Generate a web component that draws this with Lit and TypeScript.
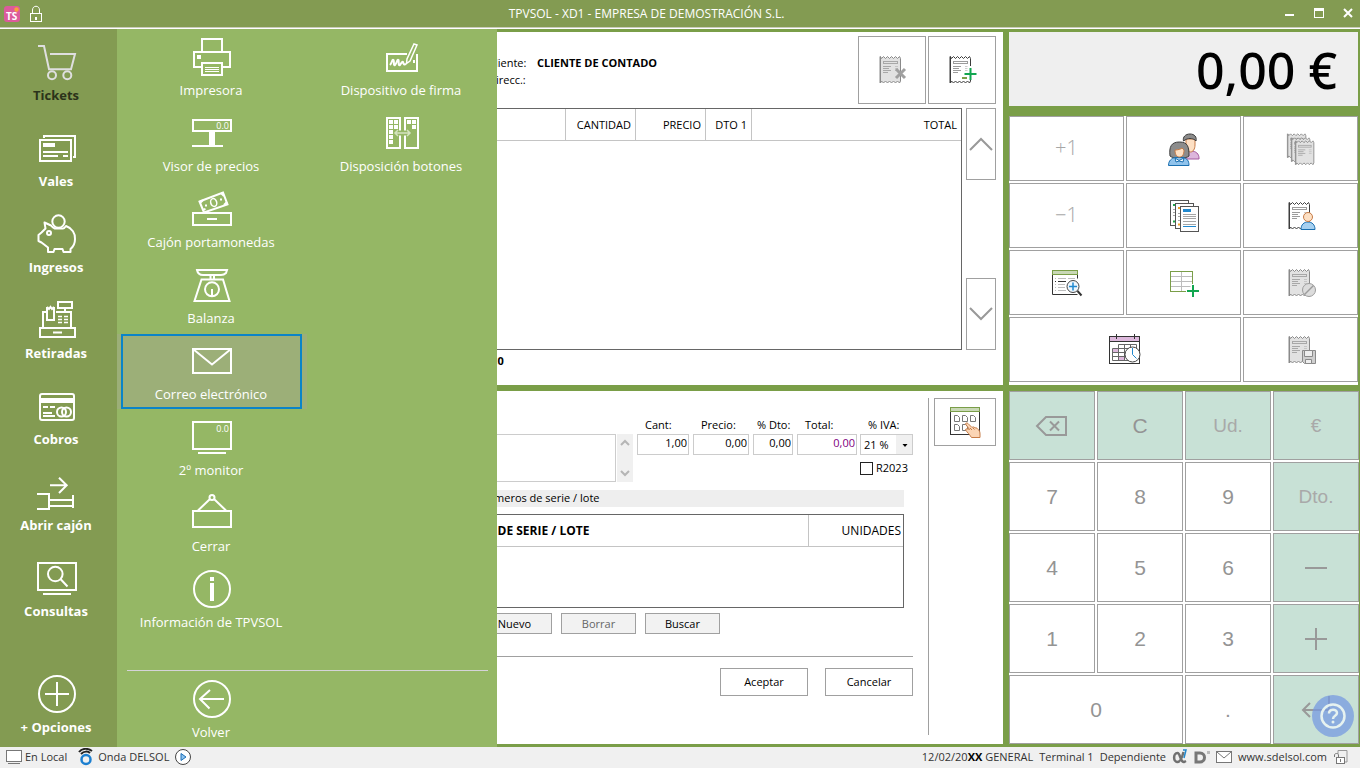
import { LitElement, html, svg, css } from "lit";
import { customElement, property, state } from "lit/decorators.js";
import { classMap } from "lit/directives/class-map.js";

/* Line icons of the two menus: all on a 48 x 48 grid. */
const menuIcons: Record<string, unknown> = {
  tickets: svg`<g stroke="#dfdfdf"><path d="M5 8H11L16 31.3H38L42 16H17"/><circle cx="19" cy="37.3" r="4"/><circle cx="34.3" cy="37.3" r="4"/></g>`,
  vales: svg`<rect x="7" y="16" width="31" height="21"/><path d="M11 14V12H42V33H40M10 28H35M10 32H25M30 32H35"/><rect x="10" y="19" width="12" height="4" fill="#fff" stroke="none"/>`,
  ingresos: svg`<circle cx="25.5" cy="11.5" r="6.2"/><circle cx="16" cy="23" r="2"/><path d="M11.5 12.5L18 15.500C20 18 21 18 22 18.500H30C31 18.500 32 17.500 33 16C39 18 42.500 23.500 42 29C42 34 40 37 37.500 39V42H30.500L29.500 39H21.500L20.500 42H15V37.500L8.500 32.500L5.500 31V25L8.500 22.500L12.500 18.500Z" stroke-linejoin="round"/>`,
  retiradas: svg`<rect x="7" y="32" width="35" height="9"/><path d="M20 36.500H29M13 16H10V32M23 16H38V32M14 11V24H21V11M14 11L16 13L17.500 11L19 13L21 11M32 12V16"/><rect x="25" y="6" width="14" height="6"/><path d="M25 20.500H29M31 20.500H35M25 23.500H29M31 23.500H35M25 26.500H29M31 26.500H35" stroke-width="1.500"/>`,
  cobros: svg`<rect x="7" y="12" width="34" height="26" rx="2"/><path d="M7 18.500H41" stroke-width="5"/><path d="M10 25H15M17 25H22M10 31H19M10 34H22"/><circle cx="28.500" cy="30" r="4.500"/><circle cx="33.500" cy="30" r="4.500"/>`,
  abrir: svg`<path d="M17 17.300H33M26 9.700L33.700 17.300L26 25M4 26H16V41H4M16 32H40M16 38H40M40 27V40"/>`,
  consultas: svg`<rect x="5" y="9" width="38" height="27"/><path d="M10 40H38M27.500 25L34.500 32.500"/><circle cx="22.300" cy="20" r="7.300"/>`,
  opciones: svg`<circle cx="24" cy="24" r="18"/><path d="M12 24H36M24 12V36"/>`,
  impresora: svg`<path d="M14 19V6H34V19M14 34H6V19H42V34H34"/><rect x="14" y="30" width="20" height="12"/><rect x="9" y="22" width="4" height="4" fill="#fff" stroke="none"/><path d="M17 34.500H31M17 36.500H31M17 38.500H31" stroke-width="1"/>`,
  visor: svg`<rect x="5" y="11" width="38" height="11"/><path d="M24 22V37" stroke-width="6"/><path d="M4 37H35"/><text x="41" y="20" text-anchor="end">0.0</text>`,
  cajon: svg`<rect x="5" y="28" width="38" height="12"/><path d="M19 34H29"/><path d="M11.500 16.500L35 7.500L39.500 19.500L16 27.500Z"/><ellipse cx="25.700" cy="17.500" rx="3" ry="4" stroke-width="1.500" transform="rotate(-15 25.700 17.500)"/><path d="M17 20.500h2M32 14.500h2M12 18l3-3M14.500 25l3-1M33 8l3 3M36 20l3-3"/>`,
  balanza: svg`<path d="M9 9H39L38 12Q36 14 33 14H15Q10 14 9 9ZM22.500 14V18M26 14V18M13.500 18.500H35L41.500 40H6.500Z"/><circle cx="24" cy="28.300" r="7"/><path d="M24 28V35"/>`,
  correo: svg`<rect x="5" y="12" width="38" height="24"/><path d="M5 12L24 27.500L43 12"/>`,
  monitor: svg`<rect x="5" y="9" width="38" height="27"/><path d="M10 40H38"/><text x="41" y="19" text-anchor="end">0.0</text>`,
  cerrar: svg`<circle cx="24" cy="8.500" r="2.500"/><path d="M22 10L10 21.500M26 10L38 21.500"/><rect x="5" y="22" width="38" height="16"/>`,
  info: svg`<circle cx="24" cy="24" r="18"/><path d="M22 14H26" stroke-width="4"/><path d="M24 18V36" stroke-width="4"/>`,
  volver: svg`<circle cx="24" cy="24" r="18"/><path d="M36 24H12M22 15L12 24L21.500 33.500"/>`,
  firma: svg`<path d="M29 21H9V38H39V21"/><path d="M12 32C14 30 14 26 15.500 27C16.500 28 15 33 17 32C19 30 19 26 20.500 27C21 29 20 33 22 32C23 31 24 28 25 29C25.500 31 26 32 28 31"/><path d="M36 11L39 12L32 28L28.500 30.500L29 26Z" stroke-width="1.500"/><path d="M36 27V30" />`,
  disposicion: svg`<rect x="9" y="9" width="13" height="30"/><rect x="27" y="9" width="13" height="30"/><g fill="#fff" stroke="none"><path d="M11 11h4v4h-4zM16 11h4v4h-4zM11 16h4v4h-4zM16 16h4v4h-4zM11 21h4v4h-4zM11 26h4v4h-4zM11 31h4v4h-4zM29 11h4v4h-4zM34 11h4v4h-4zM34 16h4v4h-4z"/></g><path d="M17 24H32" stroke="#95b765" stroke-width="5"/><path d="M17 24H32M20 21L17 24L20 27M29 21L32 24L29 27" stroke="#d5e4c0" stroke-width="1.500"/>`,
};

/* Receipt with torn top and bottom edges, shared by several buttons. */
const receipt = (ink: string, paper: string, line: string) => svg`
  <path d="M6 6.500V33" stroke="${ink}"/>
  <path d="M6.500 6.500l1 2 2-2 2 2 2-2 2 2 2-2 2 2 2-2 2 2 2-2 1 2V31l-1 2-2-2-2 2-2-2-2 2-2-2-2 2-2-2-2 2-2-2-1 2z" fill="${paper}" stroke="${ink}"/>
  <rect x="9.500" y="11.500" width="14" height="2" fill="none" stroke="${line}"/>
  <path d="M9 16.500h8M9 18.500h6M9 20.500h8M9 22.500h5" stroke="${line}"/><path d="M21 16.500h3M21 18.500h3M21 20.500h3" stroke="${line}" stroke-opacity=".5"/>`;
const greyReceipt = receipt("#8a8a8a", "#e2e2e2", "#a8a8a8");
const darkReceipt = receipt("#3c3c3c", "#fff", "#9c9c9c");

/* Coloured action icons on a 40 x 40 grid. */
const actionIcons: Record<string, unknown> = {
  remove: svg`<g transform="translate(2 0)">${greyReceipt}<path d="M22 19L31 28M31 19L22 28" stroke="#a0a0a0" stroke-width="3"/></g>`,
  add: svg`<g transform="translate(2 0)">${darkReceipt}<path d="M26 16V30M19 23.500H33" stroke="#fff" stroke-width="5"/><path d="M26.500 18V30M20.500 24H32.500" stroke="#12a650" stroke-width="2"/><path d="M18 28h5" stroke="#7a9e48" stroke-width="2"/></g>`,
  people: svg`<path d="M19 30c0-6 3-8 8-8 5 0 8 3 8 7v1z" fill="#dcb6dc" stroke="#a4589f"/><path d="M22 10v6c0 4 2 7 4.500 7s4.500-3 4.500-7v-6z" fill="#fde0c4" stroke="#c67b46"/><path d="M19.500 12c-1-4 2-7 6.500-7s7 3 6 7l-1-1c-3-2-7-2-10 0z" fill="#8c8c8c" stroke="#3c3c3c"/><path d="M6 27c-1-9 1-14 9.500-14S25 18 25 27c-3 3-16 3-19 0z" fill="#8c8c8c" stroke="#3c3c3c"/><path d="M4.500 36.500c0-5 3-7 6.500-8h8c4 1 6 3 6 8z" fill="#90c3ec" stroke="#1a6fb0"/><path d="M11 21c3 0 6-1 7-2l2 2c0 5-2 7-4.500 7S11 26 11 21z" fill="#fde0c4" stroke="#c67b46"/><path d="M11 29l4 2.500 5-2.500-1 4-4-1-3 1z" fill="#fff" stroke="#1a6fb0"/>`,
  stack: svg`<g transform="translate(1 -1) scale(.9)">${greyReceipt}</g><g transform="translate(5 3) scale(.9)">${greyReceipt}</g><g transform="translate(9 6) scale(.9)">${greyReceipt}</g>`,
  documents: svg`<g fill="#fff" stroke="#555"><rect x="6.500" y="4.500" width="18" height="25"/><rect x="11.500" y="7.500" width="18" height="25"/><rect x="16.500" y="10.500" width="18" height="25"/></g><path d="M9 9h2M9 25.500h2" stroke="#1ea64b" stroke-width="2"/><path d="M14 12h2M14 28.500h2" stroke="#f2a32c" stroke-width="2"/><path d="M9 13.500h2M9 16.500h2M9 19.500h2M14 17.500h2M14 20.500h2M14 24.500h2M19 18.500h13M19 20.500h13M19 22.500h13M19 25.500h13M19 28.500h13" stroke="#a6a6a6"/><path d="M19 14.500h8" stroke="#2189cf" stroke-width="3"/><path d="M19 30.500h13" stroke="#2189cf"/>`,
  client: svg`<g transform="translate(2 0)">${darkReceipt}<path d="M18 33.500c0-5 3-7.500 7-7.500s7 2.500 7 7.500z" fill="#a6d0f0" stroke="#1a6fb0"/><circle cx="25" cy="21" r="4.500" fill="#fde0c4" stroke="#c67b46"/></g>`,
  search: svg`<path d="M5.500 7.500v24h25M30.500 7.500v8" fill="none" stroke="#333"/><rect x="5.500" y="7.500" width="25" height="4" fill="#c9d8b6" stroke="#7a9e48"/><path d="M11 15.500h8M21 15.500h7M11 21.500h7M11 24.500h7M11 27.500h8M8 15.500h1M8 21.500h1M8 24.500h1M8 27.500h1" stroke="#bdbdbd"/><path d="M8 18.500h1M11 18.500h8" stroke="#333"/><circle cx="26" cy="23.500" r="6" fill="#eef6fc" stroke="#444"/><path d="M30.500 28l4 4.500" stroke="#333" stroke-width="2"/><path d="M26 19.500v8M22 23.500h8" stroke="#2189cf" stroke-width="1.500"/>`,
  table: svg`<rect x="6.500" y="8.500" width="22" height="20" fill="#fff" stroke="#7a9e48"/><path d="M17.500 9v19M7 13.500h21M7 18.500h21M7 23.500h21" stroke="#bdbdbd"/><path d="M29 21v14M22 28h14" stroke="#fff" stroke-width="5"/><path d="M29 22v12M23 28h12" stroke="#12a650" stroke-width="2"/>`,
  blocked: svg`<g transform="translate(2 0)">${greyReceipt}<circle cx="26" cy="27" r="6.500" fill="#dcdcdc" stroke="#9c9c9c"/><path d="M21.500 31.500l9-9" stroke="#9c9c9c" stroke-width="1.500"/></g>`,
  calendar: svg`<rect x="4.500" y="6.500" width="30" height="27" fill="#fff" stroke="#333"/><rect x="4.500" y="6.500" width="30" height="5" fill="#ddb8dc" stroke="#333"/><path d="M11.500 4v5M29.500 4v5" stroke="#333"/><path d="M8 19h5v3H8zM14 27h5v4h-5z" fill="#ddb8dc"/><path d="M13.500 14.500h18v16h-24v-12h24M7.500 22.500h24M7.500 26.500h24M13.500 14.500v16M19.500 14.500v16M25.500 14.500v16" fill="none" stroke="#666"/><circle cx="27.500" cy="24.500" r="7.500" fill="#fff" stroke="#444"/><path d="M27.500 18v6.500l4 4" fill="none" stroke="#2189cf"/>`,
  save: svg`<g transform="translate(2 0)">${greyReceipt}<path d="M19.500 20.500h13v13h-11l-2-2z" fill="#cfcfcf" stroke="#8a8a8a"/><path d="M21.500 20.500h8v6h-8zM22.500 29.500h6v4h-6z" fill="#eee" stroke="#8a8a8a"/></g>`,
  touch: svg`<rect x="5.500" y="5.500" width="29" height="27" fill="#fff" stroke="#333"/><rect x="5.500" y="5.500" width="29" height="4" fill="#c9d8b6" stroke="#7a9e48"/><path d="M9.500 13.500h3l2 2v4h-5zM17.500 13.500h3l2 2v4h-5zM25.500 13.500h3l2 2v4h-5zM9.500 22.500h3l2 2v4h-5zM17.500 22.500h3l2 2v4h-5z" fill="none" stroke="#777"/><path d="M20.500 22c0-1 1.500-1.500 2.500-.500l4 4c1-1 2.500-.500 3 .500 1-.500 2 0 2.500 1 2 1 2.500 3 2.500 5v3.500h-8.500c-2-3-4-5-6-7.500 0-1.500 2-1.500 4-.500z" fill="#fbd5b5" stroke="#c67b46"/><path d="M25 26l2 2M28 26l1.500 1.500" stroke="#c67b46"/>`,
};

/* Monochrome symbols drawn on pad keys and scroll buttons, 40 x 40. */
const keyIcons: Record<string, unknown> = {
  backspace: svg`<path d="M5 20L14 11H34V29H14ZM18 15.500L27 24.500M27 15.500L18 24.500"/>`,
  minus: svg`<path d="M9 20H31"/>`,
  plus: svg`<path d="M9 20H31M20 9V31"/>`,
  enter: svg`<path d="M33 6V20H7M14 13L7 20L14 27"/>`,
  up: svg`<path d="M9 26L20 15L31 26"/>`,
  down: svg`<path d="M9 14L20 25L31 14"/>`,
};

interface MenuEntry { icon: string; label: string; }

const mainMenu: MenuEntry[] = [
  { icon: "tickets", label: "Tickets" },
  { icon: "vales", label: "Vales" },
  { icon: "ingresos", label: "Ingresos" },
  { icon: "retiradas", label: "Retiradas" },
  { icon: "cobros", label: "Cobros" },
  { icon: "abrir", label: "Abrir cajón" },
  { icon: "consultas", label: "Consultas" },
];

const optionsMenu: MenuEntry[] = [
  { icon: "impresora", label: "Impresora" },
  { icon: "visor", label: "Visor de precios" },
  { icon: "cajon", label: "Cajón portamonedas" },
  { icon: "balanza", label: "Balanza" },
  { icon: "correo", label: "Correo electrónico" },
  { icon: "monitor", label: "2º monitor" },
  { icon: "cerrar", label: "Cerrar" },
  { icon: "info", label: "Información de TPVSOL" },
  { icon: "firma", label: "Dispositivo de firma" },
  { icon: "disposicion", label: "Disposición botones" },
];

const reset = css`
  * { box-sizing: border-box; }
  button { font: inherit; color: inherit; margin: 0; padding: 0; border: 0; background: none; cursor: pointer; border-radius: 0; }
  svg { display: block; flex: none; }
`;

@customElement("menu-item")
class MenuItem extends LitElement {
  @property() icon = "";
  @property() label = "";
  @property({ type: Boolean }) strong = false;
  @property({ type: Boolean }) current = false;
  @property({ type: Boolean }) selected = false;

  static styles = [reset, css`
    :host { display: block; }
    .item { width: 100%; display: flex; flex-direction: column; align-items: center; color: #fff; font-size: 13px; line-height: 18px; }
    .small { padding: 3px 0 6px 1px; height: 75px; font-weight: 500; }
    .strong { font-weight: 700; }
    .current { color: #2b331a; }
    .selected { box-shadow: inset 0 0 0 2px #0a84c8; }
    .label { padding-right: 2px; }
    .icon { fill: none; stroke: #fff; stroke-width: 2; }
    .icon text { fill: #fff; stroke: none; font-size: 9px; }
  `];

  render() {
    const classes = { item: true, small: !this.strong, strong: this.strong, current: this.current, selected: this.selected };
    return html`<button class=${classMap(classes)}>
      <svg class="icon" width="48" height="48" viewBox="0 0 48 48" aria-hidden="true">${menuIcons[this.icon]}</svg>
      <span class="label">${this.label}</span>
    </button>`;
  }
}

@customElement("app-root")
class AppRoot extends LitElement {
  @state() private selected = "correo";

  static styles = [reset, css`
    :host { display: flex; flex-direction: column; height: 100vh; font-family: "Open Sans", "Noto Sans", sans-serif; font-size: 11px; line-height: 16px; color: #000; background: #7a9e48; }

    .titlebar { display: flex; align-items: center; height: 29px; flex: none; background: #839b52; color: #fff; border-bottom: 1px solid #fff; box-shadow: inset 0 -1px #c9cbb8; font-size: 12px; }
    .title { flex: 1; text-align: center; }
    .tools { display: flex; gap: 6px; padding-left: 4px; }
    .win { display: flex; gap: 6px; padding-left: 32px; }
    .win svg { fill: none; stroke: #fff; stroke-width: 2; }
    .logo text { fill: #fff; font-size: 10px; font-weight: 700; }

    .body { flex: 1; min-height: 0; display: grid; grid-template-columns: 117px minmax(0, 1fr) 356px; position: relative; padding-right: 1px; }
    .sidebar { background: #839b52; padding: 9px 5px 11px 2px; display: flex; flex-direction: column; gap: 20px; }
    .bottom { margin-top: auto; }
    .flyout { position: absolute; z-index: 1; left: 117px; top: 0; bottom: 0; width: 380px; background: #95b765; display: flex; flex-direction: column; padding-top: 1px; }
    .options { display: grid; grid-template-rows: repeat(8, 76px); grid-auto-flow: column; grid-auto-columns: 190px; align-items: start; }
    .options menu-item { padding: 0 5px 0 4px; }
    .options .active { background: #9caf78; }
    .back { margin: auto 9px 0 10px; border-top: 1px solid #d5d3d8; padding-top: 1px; }
    .back menu-item { width: 169px; }

    .work { display: grid; grid-template-rows: 1fr 1fr; gap: 6px; padding: 3px 0; min-width: 0; }
    .panel { background: #fff; min-width: 0; min-height: 0; }
    .right { display: grid; grid-template-rows: 1fr 1fr; gap: 6px; padding: 3px 0; margin-left: 6px; }

    .outlined { background: #fff; border: 1px solid #a0a0a0; display: grid; place-items: center; }

    .ticket { padding: 4px 7px 0 10px; display: flex; flex-direction: column; gap: 4px; }
    .head { display: flex; gap: 2px; height: 68px; }
    .customer { margin: 19px auto 0 361px; display: grid; grid-template-columns: 49px 1fr; grid-auto-rows: 17px; white-space: nowrap; align-content: start; }
    .head .outlined { width: 68px; }
    .lines { display: flex; gap: 4px; height: 242px; }
    .grid { flex: 1; border: 1px solid #666; min-width: 0; }
    .grid table { width: 100%; border-collapse: separate; border-spacing: 0; table-layout: fixed; }
    .qty { width: 70px; }
    .disc { width: 46px; }
    .sum { width: 209px; }
    .units { width: 94px; }
    th { font-weight: 400; text-align: right; height: 32px; padding: 0 4px; border-right: 1px solid #c4c4c4; border-bottom: 1px solid #c4c4c4; white-space: nowrap; }
    th:last-child { border-right: 0; }
    .scroll { display: flex; flex-direction: column; justify-content: space-between; width: 30px; }
    .scroll .outlined { height: 72px; }
    .scroll .outlined svg { margin: 0 -6px; }
    .stroke { fill: none; stroke: #999; stroke-width: 2; }
    .count { font-weight: 700; margin-left: 361px; line-height: 14px; }

    .entry { display: flex; padding: 7px 7px 9px 10px; }
    .form { flex: 1; min-width: 0; border-right: 1px solid #a0a0a0; padding-right: 15px; display: flex; flex-direction: column; }
    .fields { display: flex; align-items: flex-start; gap: 4px; padding-top: 19px; height: 92px; }
    .note { flex: 1; min-width: 0; display: flex; gap: 1px; margin-top: 17px; }
    .note textarea { flex: 1; min-width: 0; height: 48px; resize: none; border: 1px solid #ccc; padding: 2px; font: inherit; overflow: hidden; }
    .track { width: 16px; height: 48px; background: #f0f0f0; display: flex; flex-direction: column; justify-content: space-between; padding: 4px 0; }
    .track svg { fill: none; }
    .field { display: flex; flex-direction: column; gap: 1px; }
    .field label { padding-left: 8px; white-space: nowrap; }
    .field.tight label { padding-left: 4px; }
    .field input { width: 100%; height: 21px; border: 1px solid #ccc; text-align: right; padding: 0 1px 5px; font: inherit; color: #000; background: #fff; border-radius: 0; }
    .field input.total { color: #800080; }
    .w52 { width: 52px; } .w56 { width: 56px; } .w40 { width: 40px; } .w60 { width: 60px; }
    .tax { width: 53px; margin-left: -1px; }
    .select { display: grid; }
    .select select { grid-area: 1 / 1; appearance: none; height: 21px; border: 1px solid #ccc; border-radius: 0; padding: 0 3px; font: inherit; color: #000; background: linear-gradient(#f0f0f0, #f0f0f0) right / 16px 100% no-repeat #fff; }
    .select svg { grid-area: 1 / 1; justify-self: end; align-self: center; pointer-events: none; margin-right: 4px; }
    .check { display: flex; align-items: center; gap: 3px; margin-top: 4px; }
    .check input { appearance: none; margin: 0; padding: 0; width: 13px; height: 13px; border: 1px solid #222; background: #fff; flex: none; }
    .field .check label { padding: 0; }
    .caption { background: #eee; height: 17px; margin-right: 9px; padding-left: 352px; }
    .serial { flex: none; height: 94px; margin: 7px 9px 5px 0; }
    .serial th.name { text-align: left; padding-left: 352px; font-weight: 700; font-size: 12px; }
    .serial th { font-size: 12px; }
    .serial th:last-child { padding-right: 2px; }
    .row { display: flex; gap: 9px; padding-left: 350px; padding-bottom: 22px; }
    .row button { width: 75px; height: 21px; border: 1px solid #a0a0a0; background: #f2f2f2; }
    .row button:disabled { color: #666; }
    .confirm { border-top: 1px solid #a0a0a0; padding-top: 11px; display: flex; gap: 17px; justify-content: flex-end; }
    .confirm .outlined { width: 88px; height: 28px; }
    .side { margin-left: 5px; }
    .side .outlined { width: 62px; height: 48px; }

    .top-right { display: flex; flex-direction: column; gap: 10px; padding-right: 1px; min-height: 0; }
    .display { height: 74px; background: #efefef; font-size: 50px; line-height: 76px; text-align: right; padding-right: 21px; font-weight: 500; font-family: "Noto Sans", "Open Sans", sans-serif; }
    .actions { flex: 1; background: #fff; display: grid; grid-template-columns: repeat(3, 1fr); grid-auto-rows: 1fr; gap: 2px; padding-bottom: 3px; }
    .wide { grid-column: span 2; }
    .step { color: #a6a6a6; font-weight: 300; font-size: 20px; padding-bottom: 2px; }
    .pad { background: #fff; display: grid; grid-template-columns: repeat(4, 1fr); grid-auto-rows: 1fr; gap: 2px; font-family: "Liberation Sans", Arial, sans-serif; font-size: 21px; color: #949494; }
    .pad .accent { background: #c8e1d6; }
    .pad .dim { color: #a9a9a9; font-size: 19px; }
    .help { position: absolute; z-index: 2; right: 6px; bottom: 10px; width: 42px; height: 42px; }

    .status { flex: none; height: 21px; background: #f0f0f0; color: #333; display: flex; align-items: center; gap: 6px; padding: 0 11px 2px 6px; white-space: nowrap; }
    .status a { color: inherit; text-decoration: none; }
    .cluster { display: flex; align-items: center; gap: 4px; margin-right: 5px; }
    .first { gap: 3px; }
    .push { margin-left: auto; }
    .status b { color: #000; }
  `];

  private action(icon: string, label: string, extra = "") {
    return html`<button class="outlined ${extra}" aria-label=${label}>
      <svg width="40" height="40" viewBox="0 0 40 40" fill="none">${actionIcons[icon]}</svg></button>`;
  }

  private symbol(icon: string, label: string, extra = "") {
    return html`<button class="outlined ${extra}" aria-label=${label}>
      <svg class="stroke" width="40" height="40" viewBox="0 0 40 40">${keyIcons[icon]}</svg></button>`;
  }

  private key(text: string, extra = "") {
    return html`<button class="outlined ${extra}">${text}</button>`;
  }

  private field(id: string, label: string, value: string, width: string, extra = "") {
    return html`<div class="field ${width}"><label for=${id}>${label}</label><input id=${id} class=${extra} .value=${value}></div>`;
  }

  render() {
    return html`
      <header class="titlebar">
        <div class="tools">
          <svg class="logo" width="18" height="18" viewBox="0 0 18 18" role="img" aria-label="TS"><rect x="0" y="1" width="16" height="16" rx="3" fill="#dc5b9b"/><circle cx="12.500" cy="4.500" r="2.200" fill="#f9a13a"/><text x="2" y="15">TS</text></svg>
          <svg width="18" height="18" viewBox="0 0 18 18" fill="none" stroke="#fff"><rect x="2.500" y="8.500" width="11" height="8"/><path d="M4.500 8V5C4.500 0 11.500 0 11.500 5V8"/><path d="M8 12v3" stroke-width="2"/></svg>
        </div>
        <span class="title">TPVSOL - XD1 - EMPRESA DE DEMOSTRACIÓN S.L.</span>
        <div class="win">
          <button aria-label="Minimizar"><svg width="23" height="23" viewBox="0 0 23 23"><path d="M6 12H15"/></svg></button>
          <button aria-label="Maximizar"><svg width="23" height="23" viewBox="0 0 23 23"><rect x="6.500" y="5.500" width="9" height="9" stroke-width="1"/><path d="M6 6.500H16" stroke-width="3"/></svg></button>
          <button aria-label="Cerrar"><svg width="23" height="23" viewBox="0 0 23 23"><path d="M7 6L15 14M15 6L7 14"/></svg></button>
        </div>
      </header>

      <div class="body">
        <nav class="sidebar">
          ${mainMenu.map((m, i) => html`<menu-item strong ?current=${i === 0} icon=${m.icon} label=${m.label}></menu-item>`)}
          <menu-item class="bottom" strong icon="opciones" label="+ Opciones"></menu-item>
        </nav>

        <nav class="flyout">
          <div class="options">
            ${optionsMenu.map((m) => html`<menu-item class=${classMap({ active: m.icon === this.selected })} icon=${m.icon} label=${m.label}
              ?selected=${m.icon === this.selected} @click=${() => (this.selected = m.icon)}></menu-item>`)}
          </div>
          <div class="back"><menu-item icon="volver" label="Volver"></menu-item></div>
        </nav>

        <main class="work">
          <section class="panel ticket">
            <div class="head">
              <div class="customer"><span>Cliente:</span><b>CLIENTE DE CONTADO</b><span>Direcc.:</span></div>
              ${this.action("remove", "Anular ticket")}
              ${this.action("add", "Nuevo ticket")}
            </div>
            <div class="lines">
              <div class="grid">
                <table>
                  <colgroup><col><col class="qty"><col class="qty"><col class="disc"><col class="sum"></colgroup>
                  <thead><tr><th></th><th>CANTIDAD</th><th>PRECIO</th><th>DTO 1</th><th>TOTAL</th></tr></thead>
                </table>
              </div>
              <div class="scroll">${this.symbol("up", "Subir")}${this.symbol("down", "Bajar")}</div>
            </div>
            <div class="count">0,0</div>
          </section>

          <section class="panel entry">
            <div class="form">
              <div class="fields">
                <div class="note">
                  <textarea aria-label="Descripción"></textarea>
                  <div class="track">
                    <svg width="16" height="10" viewBox="0 0 16 10" stroke="#b5b5b5" stroke-width="2"><path d="M4 7L8 3L12 7"/></svg>
                    <svg width="16" height="10" viewBox="0 0 16 10" stroke="#b5b5b5" stroke-width="2"><path d="M4 3L8 7L12 3"/></svg>
                  </div>
                </div>
                ${this.field("cant", "Cant:", "1,00", "w52")}
                ${this.field("precio", "Precio:", "0,00", "w56")}
                ${this.field("dto", "% Dto:", "0,00", "w40 tight")}
                ${this.field("total", "Total:", "0,00", "w60", "total")}
                <div class="field tax">
                  <label for="iva">% IVA:</label>
                  <div class="select">
                    <select id="iva"><option>21 %</option></select>
                    <svg width="8" height="8" viewBox="0 0 8 8"><path d="M1.500 3h5L4 6z" fill="#000"/></svg>
                  </div>
                  <div class="check"><input id="r2023" type="checkbox"><label for="r2023">R2023</label></div>
                </div>
              </div>
              <div class="caption">Números de serie / lote</div>
              <div class="grid serial">
                <table>
                  <colgroup><col><col class="units"></colgroup>
                  <thead><tr><th class="name">Nº DE SERIE / LOTE</th><th>UNIDADES</th></tr></thead>
                </table>
              </div>
              <div class="row"><button>Nuevo</button><button disabled>Borrar</button><button>Buscar</button></div>
              <div class="confirm"><button class="outlined">Aceptar</button><button class="outlined">Cancelar</button></div>
            </div>
            <div class="side">${this.action("touch", "Teclado de artículos")}</div>
          </section>
        </main>

        <aside class="right">
          <div class="top-right">
            <div class="display">0,00 €</div>
            <div class="actions">
              ${this.key("+1", "step")}${this.action("people", "Clientes")}${this.action("stack", "Tickets")}
              ${this.key("−1", "step")}${this.action("documents", "Documentos")}${this.action("client", "Ticket de cliente")}
              ${this.action("search", "Buscar artículo")}${this.action("table", "Nueva línea")}${this.action("blocked", "Anular")}
              ${this.action("calendar", "Agenda", "wide")}${this.action("save", "Guardar ticket")}
            </div>
          </div>
          <div class="pad">
            ${this.symbol("backspace", "Retroceso", "accent")}${this.key("C", "accent")}${this.key("Ud.", "accent dim")}${this.key("€", "accent dim")}
            ${this.key("7")}${this.key("8")}${this.key("9")}${this.key("Dto.", "accent dim")}
            ${this.key("4")}${this.key("5")}${this.key("6")}${this.symbol("minus", "Menos", "accent")}
            ${this.key("1")}${this.key("2")}${this.key("3")}${this.symbol("plus", "Más", "accent")}
            ${this.key("0", "wide")}${this.key(".")}${this.symbol("enter", "Intro", "accent")}
          </div>
        </aside>
        <button class="help" aria-label="Ayuda"><svg width="42" height="42" viewBox="0 0 42 42" fill="none"><circle cx="21" cy="21" r="21" fill="#7799e0" fill-opacity=".75"/><circle cx="21" cy="21" r="11.500" stroke="#e6f2f0" stroke-width="2.500"/><path d="M17 18.500C17 13.500 25 13.500 25 18C25 21 21 20.500 21 24" stroke="#e6f2f0" stroke-width="2.500"/><circle cx="21" cy="27" r="1.500" fill="#e6f2f0"/></svg></button>
      </div>

      <footer class="status">
        <span class="cluster first">
          <svg width="16" height="16" viewBox="0 0 16 16" fill="none" stroke="#777"><rect x=".5" y="1.500" width="15" height="11" fill="#fff"/><path d="M2 14.500h12"/></svg>
          En Local
        </span>
        <span class="cluster">
          <svg width="16" height="18" viewBox="0 0 16 18" fill="none"><circle cx="8" cy="11.500" r="4.500" stroke="#1c7fd0" stroke-width="2.500"/><path d="M1 4C4 0 10 0 14 3M3 6C6 3 10 3 12 5" stroke="#222" stroke-width="2"/></svg>
          Onda DELSOL
          <svg width="18" height="18" viewBox="0 0 18 18" fill="none"><circle cx="10" cy="9" r="7.500" fill="#fff" stroke="#444"/><path d="M8 5.500L13 9L8 12.500z" fill="#8dc3ee" stroke="#1c6fb8"/></svg>
        </span>
        <span class="push">12/02/20<b>XX</b> GENERAL</span>
        <span>Terminal 1</span>
        <span>Dependiente</span>
        <svg width="16" height="16" viewBox="0 0 16 16" fill="none"><path d="M11.500 3C10 9 8 13 5.500 13C1 13 1 4 5.500 4C8.500 4 8 13 12 13L14 12" stroke="#707070" stroke-width="2.500"/><path d="M11 1h3l-2 8" stroke="#2189cf" stroke-width="1.500"/></svg>
        <svg width="16" height="16" viewBox="0 0 16 16" fill="none"><path d="M2 4h4c6 0 6 9 0 9H2z" stroke="#777" stroke-width="3"/><path d="M13 3.500h3" stroke="#bbb" stroke-width="3"/></svg>
        <svg width="16" height="16" viewBox="0 0 16 16" fill="none" stroke="#777"><rect x=".5" y="2.500" width="15" height="11" fill="#fff"/><path d="M1 3l7 6 7-6"/></svg>
        <a href="#">www.sdelsol.com</a>
        <svg width="16" height="16" viewBox="0 0 16 16" fill="none" stroke="#777"><path d="M5 5V1.500h9V13h-3" stroke="#999"/><rect x="3.500" y="8.500" width="8" height="6" fill="#fff"/><path d="M1.500 8V6c0-2 4-2 4 0v2M7.500 10v3"/></svg>
      </footer>
    `;
  }
}
